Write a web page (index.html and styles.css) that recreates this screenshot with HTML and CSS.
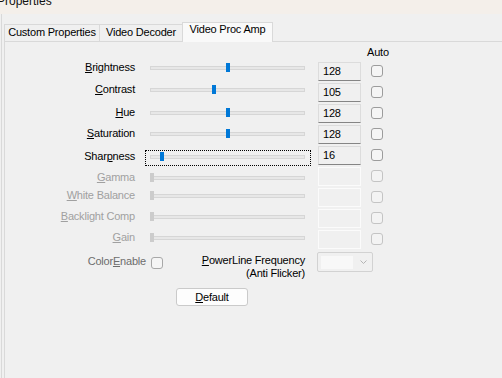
FILE: index.html
```html
<!DOCTYPE html>
<html>
<head>
<meta charset="utf-8">
<link rel="stylesheet" href="styles.css">
</head>
<body>
<div class="titlebar"><span class="title">Properties</span></div>
<div class="client">
  <div class="tabs">
    <div class="tab t1">Custom Properties</div>
    <div class="tab t2">Video Decoder</div>
    <div class="tab t3 active">Video Proc Amp</div>
  </div>
  <div class="panel">
    <div class="head"><span class="auto">Auto</span></div>
    <div class="rows">
      <div class="row o-1">
        <span class="lbl"><u>B</u>rightness</span>
        <div class="slider"><div class="track"></div><div class="thumb" style="left:79.8px"></div></div>
        <div class="edit">128</div>
        <span class="check"></span>
      </div>
      <div class="row o0">
        <span class="lbl"><u>C</u>ontrast</span>
        <div class="slider"><div class="track"></div><div class="thumb" style="left:66.2px"></div></div>
        <div class="edit">105</div>
        <span class="check"></span>
      </div>
      <div class="row o2">
        <span class="lbl"><u>H</u>ue</span>
        <div class="slider"><div class="track"></div><div class="thumb" style="left:79.8px"></div></div>
        <div class="edit">128</div>
        <span class="check"></span>
      </div>
      <div class="row o2">
        <span class="lbl"><u>S</u>aturation</span>
        <div class="slider"><div class="track"></div><div class="thumb" style="left:79.8px"></div></div>
        <div class="edit">128</div>
        <span class="check"></span>
      </div>
      <div class="row o4">
        <span class="lbl">Shar<u>p</u>ness</span>
        <div class="slider focus"><div class="track"></div><div class="thumb" style="left:13.5px"></div></div>
        <div class="edit">16</div>
        <span class="check"></span>
      </div>
      <div class="row o4 dis">
        <span class="lbl"><u>G</u>amma</span>
        <div class="slider"><div class="track"></div><div class="thumb" style="left:4px"></div></div>
        <div class="edit"></div>
        <span class="check"></span>
      </div>
      <div class="row o1 dis">
        <span class="lbl"><u>W</u>hite Balance</span>
        <div class="slider"><div class="track"></div><div class="thumb" style="left:4px"></div></div>
        <div class="edit"></div>
        <span class="check"></span>
      </div>
      <div class="row o1 dis">
        <span class="lbl"><u>B</u>acklight Comp</span>
        <div class="slider"><div class="track"></div><div class="thumb" style="left:4px"></div></div>
        <div class="edit"></div>
        <span class="check"></span>
      </div>
      <div class="row o1 dis">
        <span class="lbl"><u>G</u>ain</span>
        <div class="slider"><div class="track"></div><div class="thumb" style="left:4px"></div></div>
        <div class="edit"></div>
        <span class="check"></span>
      </div>
    </div>
    <div class="bottom">
      <div class="ce"><span>Color<u>E</u>nable</span><span class="check"></span></div>
      <div class="pl"><u>P</u>owerLine Frequency<br>(Anti Flicker)</div>
      <div class="combo"><span class="field"></span><svg width="7" height="4" viewBox="0 0 7 4"><path d="M0.5 0.5 L3.5 3.5 L6.5 0.5" fill="none" stroke="#b4b4b4" stroke-width="1"/></svg></div>
    </div>
    <button class="btn"><u>D</u>efault</button>
  </div>
</div>
</body>
</html>
```
FILE: styles.css
```css
html, body {
  margin: 0;
  padding: 0;
}
body {
  background: #f0f0f0;
  font-family: "Liberation Sans", Arial, sans-serif;
  font-size: 11px;
  line-height: 12px;
  letter-spacing: -0.2px;
  color: #000;
  overflow: hidden;
  height: 378px;
}
.titlebar {
  height: 14px;
  background: #f4efea;
  overflow: hidden;
}
.title {
  display: block;
  font-size: 12px;
  line-height: 14px;
  margin: -6px 0 0 -3px;
  letter-spacing: 0;
  color: #111;
}
.client {
  height: 364px;
  margin-left: 1px;
  border-left: 1px solid #d9d9d9;
  padding-left: 2px;
  display: flex;
  flex-direction: column;
}
.tabs {
  height: 27px;
  flex: none;
  display: flex;
  align-items: flex-end;
  position: relative;
  z-index: 1;
}
.tab {
  box-sizing: border-box;
  height: 17px;
  border: 1px solid #d9d9d9;
  border-bottom: none;
  text-align: center;
  line-height: 13px;
  padding-top: 1px;
  background: #f0f0f0;
  white-space: nowrap;
}
.tab + .tab {
  margin-left: -1px;
}
.t1 { width: 96px; }
.t2 { width: 84px; }
.t3 { width: 91px; }
.tab.active {
  height: 20px;
  margin-bottom: -1px;
  padding-top: 0;
  background: #f9f9f9;
  position: relative;
  z-index: 2;
}
.panel {
  flex: 1;
  border-top: 1px solid #d9d9d9;
  border-left: 1px solid #d9d9d9;
  background: #f0f0f0;
}
.head {
  height: 20px;
  display: grid;
  grid-template-columns: 140px 173px 53px 12px;
}
.auto {
  grid-column: 4;
  margin-left: -4px;
  padding-top: 4px;
  white-space: nowrap;
}
.rows {
  display: flex;
  flex-direction: column;
  gap: 2px;
}
.row {
  display: grid;
  grid-template-columns: 140px 173px 53px 12px;
  height: 19px;
  align-items: start;
}
.o-1 { --o: -1px; }
.o0 { --o: 0px; }
.o1 { --o: 1px; }
.o2 { --o: 2px; }
.o4 { --o: 4px; }
.lbl {
  text-align: right;
  padding-right: 10px;
  white-space: nowrap;
  margin-top: var(--o);
}
.slider {
  position: relative;
  box-sizing: border-box;
  width: 166px;
  height: 16px;
  border: 1px solid transparent;
  margin-top: var(--o);
}
.slider.focus {
  border: 1px dotted #000;
}
.track {
  position: absolute;
  left: 4px;
  top: 4px;
  width: 155px;
  height: 4px;
  box-sizing: border-box;
  background: #e7e7e7;
  border: 1px solid #d6d6d6;
}
.thumb {
  position: absolute;
  top: 1px;
  width: 4px;
  height: 9px;
  background: #0078d7;
}
.edit {
  box-sizing: border-box;
  width: 43px;
  height: 19px;
  border: 1px solid #dcdcdc;
  border-bottom-color: #858585;
  padding-left: 4px;
  line-height: 17px;
  background: #f0f0f0;
}
.check {
  display: block;
  box-sizing: border-box;
  width: 12px;
  height: 12px;
  margin-top: 3px;
  border: 1px solid #9c9c9c;
  border-radius: 3px;
  background: #f5f5f5;
}
.dis .lbl { color: #a0a0a0; }
.dis .thumb { background: #cccccc; }
.dis .edit { border-color: #fbfbfb; }
.dis .check { border-color: #c4c4c4; background: #f3f3f3; }
.bottom {
  display: flex;
  align-items: flex-start;
  margin-top: 2px;
}
.ce {
  width: 158px;
  display: flex;
  justify-content: flex-end;
  gap: 5px;
  margin-top: 4px;
  color: #6d6d6d;
  white-space: nowrap;
}
.ce .check {
  margin-top: 2px;
  border-color: #a8a8a8;
}
.pl {
  width: 142px;
  text-align: right;
  line-height: 13px;
  margin-top: 3px;
  white-space: nowrap;
}
.combo {
  margin-left: 12px;
  margin-top: 1px;
  width: 56px;
  height: 20px;
  box-sizing: border-box;
  border: 1px solid #d2d2d2;
  border-radius: 2px;
  background: #f0f0f0;
  display: flex;
  align-items: center;
  padding-left: 3px;
}
.combo .field {
  width: 32px;
  height: 13px;
  background: #f8f8f8;
}
.combo svg {
  margin-left: 7px;
  display: block;
}
.btn {
  display: block;
  margin: 8px 0 0 171px;
  width: 72px;
  height: 18px;
  box-sizing: border-box;
  border: 1px solid #cacaca;
  border-radius: 3px;
  background: #fdfdfd;
  font: inherit;
  letter-spacing: inherit;
  line-height: 16px;
  padding: 0;
  color: #000;
}
```
